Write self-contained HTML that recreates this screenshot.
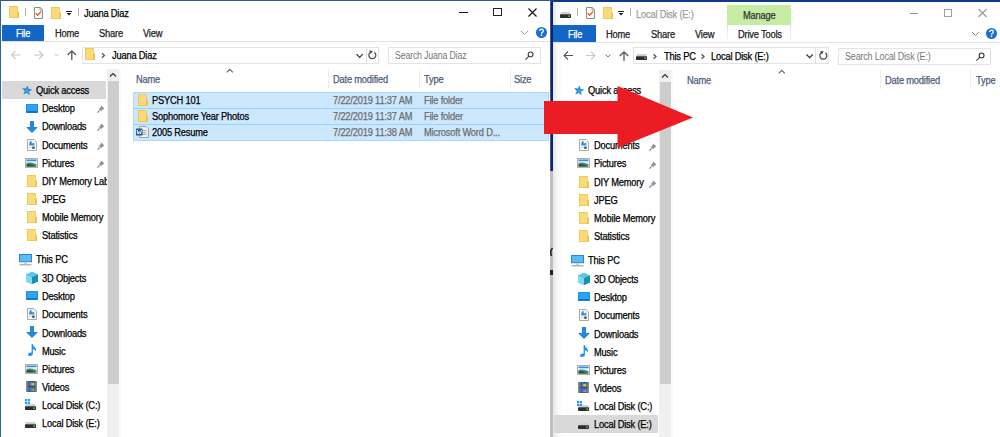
<!DOCTYPE html><html><head><meta charset="utf-8"><style>
*{margin:0;padding:0;box-sizing:border-box}
html,body{width:1000px;height:437px;overflow:hidden;background:#fff}
body{position:relative;font-family:"Liberation Sans",sans-serif;font-size:10px;letter-spacing:-0.2px;font-variant-ligatures:none;color:#000;-webkit-text-stroke-width:0.25px}
.a{position:absolute}
.t{position:absolute;white-space:nowrap;line-height:12px;margin-top:1px;transform:scaleX(0.93);transform-origin:0 0}
</style></head><body>

<svg width="0" height="0" style="position:absolute">
<defs>
<symbol id="fold" viewBox="0 0 10 12">
  <rect x="0" y="0" width="8.8" height="12" fill="#f1c54e"/>
  <rect x="0.8" y="0.8" width="7.2" height="10.4" fill="#f9db7e"/>
  <rect x="8.2" y="5.6" width="1.8" height="6.4" fill="#efc24a"/>
</symbol>
<symbol id="doccheck" viewBox="0 0 9 12">
  <path d="M0.5 0.5 H6.3 L8.5 2.7 V11.5 H0.5 Z" fill="#fff" stroke="#8a8a8a" stroke-width="1"/>
  <path d="M6 0.5 V3 H8.5" fill="#cfe0f0" stroke="#8a8a8a" stroke-width="0.8"/>
  <path d="M1.8 6.2 L3.6 8.2 L7.2 4.6" fill="none" stroke="#ea5a22" stroke-width="1.4"/>
</symbol>
<symbol id="qdrop" viewBox="0 0 6 5">
  <rect x="0" y="0" width="6" height="1" fill="#222"/>
  <path d="M0.5 2 H5.5 L3 4.6 Z" fill="#222"/>
</symbol>
<symbol id="drive" viewBox="0 0 11 6">
  <path d="M1.2 0 H9.8 L11 2.2 V2.5 H0 V2.2 Z" fill="#d0d0d0"/>
  <rect x="0" y="2.3" width="11" height="3.7" rx="0.8" fill="#2e2e2e"/>
  <rect x="8.2" y="3.4" width="1.8" height="1.5" fill="#3fcf4a"/>
</symbol>
<symbol id="star" viewBox="0 0 10 9">
  <polygon points="5.58,-0.16 6.36,3.14 9.71,3.68 6.81,5.45 7.33,8.80 4.76,6.59 1.73,8.11 3.04,4.98 0.65,2.57 4.03,2.85" fill="#1f86dc" stroke="#1f86dc" stroke-width="0.5" stroke-linejoin="round"/>
  <circle cx="5" cy="4.8" r="1.5" fill="#34aef2"/>
</symbol>
<symbol id="desk" viewBox="0 0 12 9">
  <rect x="0" y="0" width="12" height="9" fill="#1e8ee0"/>
  <rect x="0.8" y="0.8" width="10.4" height="6.6" fill="#2aa4f4"/>
  <rect x="0.8" y="7.4" width="10.4" height="1" fill="#0d5fa8"/>
</symbol>
<symbol id="dl" viewBox="0 0 12 12">
  <path d="M4 0 H8 V6 H12 L6 12 L0 6 H4 Z" fill="#2a86da"/>
</symbol>
<symbol id="docs" viewBox="0 0 10 12">
  <path d="M0.5 0.5 H7 L9.5 3 V11.5 H0.5 Z" fill="#f6f6f6" stroke="#ababab" stroke-width="1"/>
  <path d="M2.2 5.2 Q2.6 2 4.6 1.8 Q4 3.4 5.2 4.4 Q6.6 4.4 7.2 3.6 V6 H2.2 Z" fill="#2f8ee0"/>
  <rect x="2" y="6.2" width="6" height="0.9" fill="#8fc0e8"/>
  <rect x="5.2" y="7.6" width="2.4" height="2.2" fill="#1f5a4a"/>
  <rect x="2" y="8.2" width="2.6" height="0.7" fill="#c8c8c8"/>
</symbol>
<symbol id="pics" viewBox="0 0 13 10">
  <rect x="0.5" y="0.5" width="12" height="9" fill="#f2f2f2" stroke="#b0b0b0" stroke-width="1"/>
  <rect x="1.5" y="1.5" width="10" height="7" fill="#d8ecfa"/>
  <rect x="1.5" y="1.5" width="10" height="1.6" fill="#3a8ee0"/>
  <path d="M1.5 5.2 Q5 3.6 11.5 6.2 V8.5 H1.5 Z" fill="#4a8a6a"/>
  <path d="M1.5 6.6 Q4 5.6 8 7.2 L11.5 8.5 H1.5 Z" fill="#244a38"/>
</symbol>
<symbol id="pc" viewBox="0 0 13 12">
  <rect x="0" y="0" width="13" height="8.2" fill="#2a78c8"/>
  <rect x="0.8" y="0.8" width="11.4" height="6.6" fill="#58bdf6"/>
  <rect x="5" y="8.2" width="3" height="1.8" fill="#d0d0d0"/>
  <rect x="0.5" y="10.2" width="12" height="1.2" fill="#9aa4ae"/>
</symbol>
<symbol id="cube" viewBox="0 0 12 12">
  <path d="M6 0 L12 2.5 V9.5 L6 12 L0 9.5 V2.5 Z" fill="#24a8c8"/>
  <path d="M0 2.5 L6 5 V12 L0 9.5 Z" fill="#7fdcf0"/>
  <path d="M6 5 L12 2.5 V9.5 L6 12 Z" fill="#1890b0"/>
  <path d="M0 2.5 L6 0 L12 2.5 L6 5 Z" fill="#5cc8e4"/>
</symbol>
<symbol id="music" viewBox="0 0 10 12">
  <path d="M4.6 0.2 H5.9 Q6.3 2.6 8.2 3.8 Q9.6 5 8.8 7.4 Q8.4 5.6 5.9 5 V9.6 Q5.9 12 3 12 Q0.6 12 1 10.2 Q1.5 8.2 4.6 8.4 Z" fill="#1f8ff0"/>
</symbol>
<symbol id="vid" viewBox="0 0 11 11">
  <rect x="0" y="0" width="11" height="11" fill="#5a5a5a"/>
  <rect x="0" y="0" width="1.6" height="11" fill="#8a8a8a"/>
  <rect x="9.4" y="0" width="1.6" height="11" fill="#8a8a8a"/>
  <rect x="2" y="0.8" width="7" height="9.4" fill="#2f6fd8"/>
  <rect x="5.2" y="2" width="3" height="2.6" fill="#e6c020"/>
  <rect x="5" y="4.6" width="3" height="1.6" fill="#2a9a40"/>
  <rect x="2.4" y="3.6" width="2" height="1.4" fill="#d04030"/>
  <rect x="5.4" y="8.2" width="3" height="1.6" fill="#e09a20"/>
  <rect x="2" y="5.4" width="7" height="0.6" fill="#303030"/>
</symbol>
<symbol id="pin" viewBox="0 0 8 8">
  <path d="M4.4 0.6 L7.4 3.6 L6.2 4.2 L4.6 5.4 L4.4 6.6 L1.4 3.6 L2.6 3.4 L3.8 1.8 Z" fill="#8f9598"/>
  <path d="M2.6 5.4 L0.4 7.6" stroke="#7a7f82" stroke-width="1.2"/>
</symbol>
<symbol id="word" viewBox="0 0 13 12">
  <path d="M3.5 0.5 H10 L12.5 3 V11.5 H3.5 Z" fill="#f2f2f2" stroke="#a0a0a0" stroke-width="1"/>
  <rect x="5.5" y="4" width="5" height="0.9" fill="#a0a0a0"/>
  <rect x="5.5" y="6" width="5" height="0.9" fill="#a0a0a0"/>
  <rect x="5.5" y="8" width="5" height="0.9" fill="#a0a0a0"/>
  <rect x="0" y="2.5" width="6.5" height="7" fill="#2b5797"/>
  <path d="M1 4 L2 8 L3.2 5.5 L4.4 8 L5.5 4" fill="none" stroke="#fff" stroke-width="0.9"/>
</symbol>
<symbol id="winlogo" viewBox="0 0 5 5">
  <rect x="0" y="0" width="2.2" height="2.2" fill="#19a0f0"/>
  <rect x="2.8" y="0" width="2.2" height="2.2" fill="#19a0f0"/>
  <rect x="0" y="2.8" width="2.2" height="2.2" fill="#19a0f0"/>
  <rect x="2.8" y="2.8" width="2.2" height="2.2" fill="#19a0f0"/>
</symbol>
<symbol id="help" viewBox="0 0 11 11">
  <circle cx="5.5" cy="5.5" r="5.5" fill="#1a6fd0"/>
  <path d="M3.7 4 Q3.7 2.2 5.5 2.2 Q7.3 2.2 7.3 3.9 Q7.3 5 6 5.6 Q5.5 5.9 5.5 6.8" fill="none" stroke="#fff" stroke-width="1.3"/>
  <rect x="4.8" y="7.6" width="1.4" height="1.4" fill="#fff"/>
</symbol>
</defs>
</svg>

<div class="a" style="left:0;top:0;width:553px;height:437px;overflow:hidden">
<div class="a" style="left:0px;top:0px;width:553px;height:1px;background:#2c5b9c;"></div>
<div class="a" style="left:0px;top:0px;width:1px;height:437px;background:#2d62a0;"></div>
<svg class="a" style="left:9px;top:6px" width="10" height="12"><use href="#fold"/></svg>
<div class="a" style="left:25px;top:8px;width:1px;height:8px;background:#b0b0b0;"></div>
<svg class="a" style="left:34px;top:7px" width="9" height="12"><use href="#doccheck"/></svg>
<svg class="a" style="left:51px;top:7px" width="10" height="12"><use href="#fold"/></svg>
<svg class="a" style="left:66px;top:11px" width="6" height="5"><use href="#qdrop"/></svg>
<div class="a" style="left:78px;top:8px;width:1px;height:8px;background:#b0b0b0;"></div>
<div class="t" style="left:84px;top:7px;color:#000;font-size:10px">Juana Diaz</div>
<div class="a" style="left:459px;top:12px;width:9px;height:1px;background:#111;"></div>
<div class="a" style="left:493px;top:8px;width:9px;height:8px;border:1px solid #222;"></div>
<svg class="a" style="left:536px;top:27px" width="11" height="11"><use href="#help"/></svg>
<div class="a" style="left:2px;top:25px;width:42px;height:17px;background:#1466c6;"></div>
<div class="t" style="left:16px;top:27px;color:#fff;">File</div>
<div class="t" style="left:55px;top:27px;color:#222;">Home</div>
<div class="t" style="left:99px;top:27px;color:#222;">Share</div>
<div class="t" style="left:143px;top:27px;color:#222;">View</div>
<div class="a" style="left:1px;top:41px;width:549px;height:1px;background:#e3e3e3;"></div>
<div class="a" style="left:82px;top:47px;width:285px;height:17px;border:1px solid #e3e3e3;"></div>
<div class="a" style="left:366px;top:47px;width:13px;height:17px;border:1px solid #e3e3e3;"></div>
<svg class="a" style="left:85px;top:48px" width="10" height="12"><use href="#fold"/></svg>
<div class="t" style="left:112px;top:49px;">Juana Diaz</div>
<div class="a" style="left:388px;top:47px;width:153px;height:17px;border:1px solid #e3e3e3;"></div>
<div class="t" style="left:395px;top:49px;color:#777;transform:scaleX(0.88);-webkit-text-stroke-width:0">Search Juana Diaz</div>
<div class="a" style="left:2px;top:81px;width:104px;height:18px;background:#d9d9d9;"></div>
<svg class="a" style="left:22px;top:86px" width="10" height="9"><use href="#star"/></svg>
<div class="t" style="left:36px;top:84px;">Quick access</div>
<svg class="a" style="left:26px;top:104px" width="12" height="9"><use href="#desk"/></svg>
<div class="t" style="left:42px;top:102px;">Desktop</div>
<svg class="a" style="left:97px;top:105px" width="8" height="8"><use href="#pin"/></svg>
<svg class="a" style="left:26px;top:121px" width="12" height="12"><use href="#dl"/></svg>
<div class="t" style="left:42px;top:120px;">Downloads</div>
<svg class="a" style="left:97px;top:123px" width="8" height="8"><use href="#pin"/></svg>
<svg class="a" style="left:27px;top:139px" width="10" height="12"><use href="#docs"/></svg>
<div class="t" style="left:42px;top:139px;">Documents</div>
<svg class="a" style="left:97px;top:142px" width="8" height="8"><use href="#pin"/></svg>
<svg class="a" style="left:25px;top:158px" width="13" height="10"><use href="#pics"/></svg>
<div class="t" style="left:42px;top:157px;">Pictures</div>
<svg class="a" style="left:97px;top:160px" width="8" height="8"><use href="#pin"/></svg>
<svg class="a" style="left:27px;top:175px" width="10" height="12"><use href="#fold"/></svg>
<div class="t" style="left:42px;top:175px;">DIY Memory Lab</div>
<svg class="a" style="left:27px;top:193px" width="10" height="12"><use href="#fold"/></svg>
<div class="t" style="left:42px;top:193px;">JPEG</div>
<svg class="a" style="left:27px;top:211px" width="10" height="12"><use href="#fold"/></svg>
<div class="t" style="left:42px;top:211px;">Mobile Memory</div>
<svg class="a" style="left:27px;top:229px" width="10" height="12"><use href="#fold"/></svg>
<div class="t" style="left:42px;top:229px;">Statistics</div>
<svg class="a" style="left:19px;top:254px" width="13" height="12"><use href="#pc"/></svg>
<div class="t" style="left:36px;top:253px;">This PC</div>
<svg class="a" style="left:26px;top:272px" width="12" height="12"><use href="#cube"/></svg>
<div class="t" style="left:42px;top:272px;">3D Objects</div>
<svg class="a" style="left:26px;top:291px" width="12" height="9"><use href="#desk"/></svg>
<div class="t" style="left:42px;top:290px;">Desktop</div>
<svg class="a" style="left:27px;top:308px" width="10" height="12"><use href="#docs"/></svg>
<div class="t" style="left:42px;top:308px;">Documents</div>
<svg class="a" style="left:26px;top:326px" width="12" height="12"><use href="#dl"/></svg>
<div class="t" style="left:42px;top:327px;">Downloads</div>
<svg class="a" style="left:27px;top:344px" width="10" height="12"><use href="#music"/></svg>
<div class="t" style="left:42px;top:345px;">Music</div>
<svg class="a" style="left:25px;top:364px" width="13" height="10"><use href="#pics"/></svg>
<div class="t" style="left:42px;top:363px;">Pictures</div>
<svg class="a" style="left:26px;top:381px" width="11" height="11"><use href="#vid"/></svg>
<div class="t" style="left:42px;top:381px;">Videos</div>
<svg class="a" style="left:25px;top:404px" width="11" height="6"><use href="#drive"/></svg>
<div class="t" style="left:42px;top:399px;">Local Disk (C:)</div>
<svg class="a" style="left:25px;top:422px" width="11" height="6"><use href="#drive"/></svg>
<div class="t" style="left:42px;top:417px;">Local Disk (E:)</div>
<svg class="a" style="left:25px;top:399px" width="5" height="5"><use href="#winlogo"/></svg>
<div class="a" style="left:107px;top:170px;width:13px;height:20px;background:#f0f0f0;"></div>
<div class="a" style="left:107px;top:69px;width:12px;height:368px;background:#f0f0f0;"></div>
<div class="a" style="left:108px;top:81px;width:11px;height:303px;background:#cdcdcd;"></div>
<div class="a" style="left:119px;top:69px;width:2px;height:368px;background:#fafafa;"></div>
<div class="t" style="left:136px;top:73px;color:#4c607a;">Name</div>
<div class="t" style="left:333px;top:73px;color:#4c607a;">Date modified</div>
<div class="t" style="left:424px;top:73px;color:#4c607a;">Type</div>
<div class="t" style="left:514px;top:73px;color:#4c607a;">Size</div>
<div class="a" style="left:328px;top:69px;width:1px;height:19px;background:#ececec;"></div>
<div class="a" style="left:419px;top:69px;width:1px;height:19px;background:#ececec;"></div>
<div class="a" style="left:510px;top:69px;width:1px;height:19px;background:#ececec;"></div>
<div class="a" style="left:133px;top:92px;width:416px;height:49px;background:#cce8ff;"></div>
<svg class="a" style="left:138px;top:94px" width="10" height="12"><use href="#fold"/></svg>
<svg class="a" style="left:138px;top:110px" width="10" height="12"><use href="#fold"/></svg>
<svg class="a" style="left:136px;top:126px" width="13" height="12"><use href="#word"/></svg>
<div class="t" style="left:152px;top:94px;">PSYCH 101</div>
<div class="t" style="left:152px;top:110px;">Sophomore Year Photos</div>
<div class="t" style="left:152px;top:126px;">2005 Resume</div>
<div class="t" style="left:333px;top:94px;color:#6d6d6d;">7/22/2019 11:37 AM</div>
<div class="t" style="left:424px;top:94px;color:#6d6d6d;">File folder</div>
<div class="t" style="left:333px;top:110px;color:#6d6d6d;">7/22/2019 11:37 AM</div>
<div class="t" style="left:424px;top:110px;color:#6d6d6d;">File folder</div>
<div class="t" style="left:333px;top:126px;color:#6d6d6d;">7/22/2019 11:38 AM</div>
<div class="t" style="left:424px;top:126px;color:#6d6d6d;">Microsoft Word D...</div>
</div>
<div class="a" style="left:550px;top:0px;width:1px;height:171px;background:#3d5f9c;"></div>
<div class="a" style="left:551px;top:0px;width:2px;height:171px;background:#0c2468;"></div>
<div class="a" style="left:553px;top:0;width:447px;height:437px;overflow:hidden">
</div>
<div class="a" style="left:551px;top:0px;width:449px;height:2px;background:#0e3a88;"></div>
<div class="a" style="left:550px;top:171px;width:4px;height:266px;background:#bfbfbf;"></div>
<div class="a" style="left:553px;top:2px;width:9px;height:435px;background:linear-gradient(90deg,#e6e6e6,#f6f6f6 45%,#fff)"></div>
<svg class="a" style="left:560px;top:12px" width="11" height="6"><use href="#drive"/></svg>
<div class="a" style="left:577px;top:8px;width:1px;height:8px;background:#b0b0b0;"></div>
<svg class="a" style="left:586px;top:7px" width="9" height="12"><use href="#doccheck"/></svg>
<svg class="a" style="left:603px;top:7px" width="10" height="12"><use href="#fold"/></svg>
<svg class="a" style="left:618px;top:11px" width="6" height="5"><use href="#qdrop"/></svg>
<div class="a" style="left:630px;top:8px;width:1px;height:8px;background:#b0b0b0;"></div>
<div class="t" style="left:636px;top:8px;color:#a0a0a0;font-size:10px">Local Disk (E:)</div>
<div class="a" style="left:727px;top:5px;width:64px;height:20px;background:#c6eca4;"></div>
<div class="t" style="left:743px;top:9px;color:#333;">Manage</div>
<div class="a" style="left:910px;top:13px;width:8px;height:1px;background:#999;"></div>
<div class="a" style="left:944px;top:9px;width:8px;height:8px;border:1px solid #a0a0a0;"></div>
<svg class="a" style="left:986px;top:28px" width="11" height="11"><use href="#help"/></svg>
<div class="a" style="left:553px;top:25px;width:43px;height:17px;background:#1466c6;"></div>
<div class="t" style="left:568px;top:28px;color:#fff;">File</div>
<div class="t" style="left:606px;top:28px;color:#222;">Home</div>
<div class="t" style="left:651px;top:28px;color:#222;">Share</div>
<div class="t" style="left:695px;top:28px;color:#222;">View</div>
<div class="t" style="left:738px;top:28px;color:#222;">Drive Tools</div>
<div class="a" style="left:727px;top:25px;width:1px;height:16px;background:linear-gradient(#e0e0e0,#f8f8f8)"></div><div class="a" style="left:790px;top:25px;width:1px;height:16px;background:linear-gradient(#e0e0e0,#f8f8f8)"></div>
<div class="a" style="left:553px;top:42px;width:447px;height:1px;background:#e3e3e3;"></div>
<div class="a" style="left:633px;top:47px;width:183px;height:17px;border:1px solid #e3e3e3;"></div>
<div class="a" style="left:815px;top:47px;width:14px;height:17px;border:1px solid #e3e3e3;"></div>
<svg class="a" style="left:636px;top:54px" width="11" height="6"><use href="#drive"/></svg>
<div class="t" style="left:664px;top:50px;">This PC</div>
<div class="t" style="left:711px;top:50px;">Local Disk (E:)</div>
<div class="a" style="left:838px;top:48px;width:153px;height:17px;border:1px solid #e3e3e3;"></div>
<div class="t" style="left:845px;top:50px;color:#777;transform:scaleX(0.9);-webkit-text-stroke-width:0">Search Local Disk (E:)</div>
<div class="t" style="left:687px;top:74px;color:#4c607a;">Name</div>
<div class="t" style="left:885px;top:74px;color:#4c607a;">Date modified</div>
<div class="t" style="left:976px;top:74px;color:#4c607a;">Type</div>
<div class="a" style="left:880px;top:70px;width:1px;height:19px;background:#ececec;"></div>
<div class="a" style="left:970px;top:70px;width:1px;height:19px;background:#ececec;"></div>
<svg class="a" style="left:574px;top:86px" width="10" height="9"><use href="#star"/></svg>
<div class="t" style="left:588px;top:84px;">Quick access</div>
<svg class="a" style="left:579px;top:139px" width="10" height="12"><use href="#docs"/></svg>
<div class="t" style="left:594px;top:139px;">Documents</div>
<svg class="a" style="left:649px;top:143px" width="8" height="8"><use href="#pin"/></svg>
<svg class="a" style="left:577px;top:158px" width="13" height="10"><use href="#pics"/></svg>
<div class="t" style="left:594px;top:157px;">Pictures</div>
<svg class="a" style="left:649px;top:161px" width="8" height="8"><use href="#pin"/></svg>
<svg class="a" style="left:579px;top:176px" width="10" height="12"><use href="#fold"/></svg>
<div class="t" style="left:594px;top:176px;">DIY Memory</div>
<svg class="a" style="left:649px;top:180px" width="8" height="8"><use href="#pin"/></svg>
<svg class="a" style="left:579px;top:194px" width="10" height="12"><use href="#fold"/></svg>
<div class="t" style="left:594px;top:194px;">JPEG</div>
<svg class="a" style="left:579px;top:212px" width="10" height="12"><use href="#fold"/></svg>
<div class="t" style="left:594px;top:212px;">Mobile Memory</div>
<svg class="a" style="left:579px;top:230px" width="10" height="12"><use href="#fold"/></svg>
<div class="t" style="left:594px;top:230px;">Statistics</div>
<svg class="a" style="left:571px;top:255px" width="13" height="12"><use href="#pc"/></svg>
<div class="t" style="left:588px;top:254px;">This PC</div>
<div class="a" style="left:554px;top:415px;width:104px;height:18px;background:#d9d9d9;"></div>
<svg class="a" style="left:578px;top:273px" width="12" height="12"><use href="#cube"/></svg>
<div class="t" style="left:594px;top:273px;">3D Objects</div>
<svg class="a" style="left:578px;top:292px" width="12" height="9"><use href="#desk"/></svg>
<div class="t" style="left:594px;top:291px;">Desktop</div>
<svg class="a" style="left:579px;top:309px" width="10" height="12"><use href="#docs"/></svg>
<div class="t" style="left:594px;top:309px;">Documents</div>
<svg class="a" style="left:578px;top:327px" width="12" height="12"><use href="#dl"/></svg>
<div class="t" style="left:594px;top:328px;">Downloads</div>
<svg class="a" style="left:579px;top:345px" width="10" height="12"><use href="#music"/></svg>
<div class="t" style="left:594px;top:346px;">Music</div>
<svg class="a" style="left:577px;top:365px" width="13" height="10"><use href="#pics"/></svg>
<div class="t" style="left:594px;top:364px;">Pictures</div>
<svg class="a" style="left:578px;top:382px" width="11" height="11"><use href="#vid"/></svg>
<div class="t" style="left:594px;top:382px;">Videos</div>
<svg class="a" style="left:578px;top:405px" width="11" height="6"><use href="#drive"/></svg>
<div class="t" style="left:594px;top:400px;">Local Disk (C:)</div>
<svg class="a" style="left:578px;top:423px" width="11" height="6"><use href="#drive"/></svg>
<div class="t" style="left:594px;top:418px;">Local Disk (E:)</div>
<svg class="a" style="left:577px;top:401px" width="5" height="5"><use href="#winlogo"/></svg>
<div class="a" style="left:659px;top:70px;width:12px;height:367px;background:#f0f0f0;"></div>
<div class="a" style="left:660px;top:82px;width:11px;height:302px;background:#cdcdcd;"></div>
<div class="a" style="left:671px;top:70px;width:2px;height:367px;background:#fafafa;"></div>
<div class="a" style="left:550px;top:270px;width:3px;height:5px;background:#222;"></div>
<svg class="a" style="left:0;top:0" width="1000" height="437"><path d="M528.5 8.5 L536.5 16.5 M536.5 8.5 L528.5 16.5" fill="none" stroke="#111" stroke-width="1.1"/><path d="M521 31 L524.5 34.5 L528 31" fill="none" stroke="#999" stroke-width="1"/><path d="M11.5 55 H20.5 M15.5 51 L11.5 55 L15.5 59" fill="none" stroke="#c8c8c8" stroke-width="1.1"/><path d="M34 55 H43 M39 51 L43 55 L39 59" fill="none" stroke="#c8c8c8" stroke-width="1.1"/><path d="M54.5 54 L56.5 56 L58.5 54" fill="none" stroke="#c0c0c0" stroke-width="0.9"/><path d="M71.8 51 V60 M67.6 55 L71.8 50.8 L76 55" fill="none" stroke="#555" stroke-width="1.3"/><path d="M102 53.2 L104.4 55.5 L102 57.8" fill="none" stroke="#555" stroke-width="1.3"/><path d="M356.5 54.2 L359.6 57.4 L362.7 54.2" fill="none" stroke="#333" stroke-width="1.2"/><path d="M370.6 52.2 A3.5 3.5 0 1 0 374.4 52.4" fill="none" stroke="#444" stroke-width="1.2"/><path d="M369.2 50.6 L372.8 51 L370.6 54 Z" fill="#444"/><path d="M528.9 56.2 L525.4 59.7" fill="none" stroke="#444" stroke-width="1.2"/><path d="M530.6 54.4 m-2.4 0 a2.4 2.4 0 1 0 4.8 0 a2.4 2.4 0 1 0 -4.8 0" fill="none" stroke="#333" stroke-width="1.1"/><path d="M110 76.5 L113 73.5 L116 76.5" fill="none" stroke="#333" stroke-width="1.2"/><path d="M226.8 72.4 L229.8 69.4 L232.8 72.4" fill="none" stroke="#666" stroke-width="1.2"/><path d="M133.5 92.5 H548.5 V140.5 H133.5 Z" fill="none" stroke="#a8d8ff" stroke-width="1"/><path d="M133.5 108.5 H548.5 M133.5 124.5 H548.5" fill="none" stroke="#99d1ff" stroke-width="1"/><path d="M978.5 9 L986.5 17 M986.5 9 L978.5 17" fill="none" stroke="#999" stroke-width="1.1"/><path d="M972 32 L975.5 35.5 L979 32" fill="none" stroke="#888" stroke-width="1"/><path d="M564 55.5 H573 M568 51.5 L564 55.5 L568 59.5" fill="none" stroke="#555" stroke-width="1.1"/><path d="M586 55.5 H595 M591 51.5 L595 55.5 L591 59.5" fill="none" stroke="#c8c8c8" stroke-width="1.1"/><path d="M605.5 54.5 L608 57 L610.5 54.5" fill="none" stroke="#777" stroke-width="1"/><path d="M624 52 V61 M619.8 56 L624 51.8 L628.2 56" fill="none" stroke="#555" stroke-width="1.3"/><path d="M653.6 54.2 L656 56.5 L653.6 58.8" fill="none" stroke="#555" stroke-width="1.3"/><path d="M701.6 54.2 L704 56.5 L701.6 58.8" fill="none" stroke="#555" stroke-width="1.3"/><path d="M806.5 54.5 L809.6 57.7 L812.7 54.5" fill="none" stroke="#333" stroke-width="1.2"/><path d="M821.6 52.6 A3.5 3.5 0 1 0 825.4 52.8" fill="none" stroke="#444" stroke-width="1.2"/><path d="M820.2 51 L823.8 51.4 L821.6 54.4 Z" fill="#444"/><path d="M979.9 57.2 L976.4 60.7" fill="none" stroke="#444" stroke-width="1.2"/><path d="M981.6 55.4 m-2.4 0 a2.4 2.4 0 1 0 4.8 0 a2.4 2.4 0 1 0 -4.8 0" fill="none" stroke="#333" stroke-width="1.1"/><path d="M778.8 73.4 L781.8 70.4 L784.8 73.4" fill="none" stroke="#666" stroke-width="1.2"/><path d="M662 77.5 L665 74.5 L668 77.5" fill="none" stroke="#333" stroke-width="1.2"/><path d="M552.5 248 Q549.5 251 551.5 256" fill="none" stroke="#222" stroke-width="1.6"/></svg>
<svg class="a" style="left:0;top:0" width="1000" height="437"><polygon points="544,101 617.5,101 617.5,86 693,117.5 617.5,148 617.5,134 544,134" fill="#ec1c24"/></svg>
</body></html>
